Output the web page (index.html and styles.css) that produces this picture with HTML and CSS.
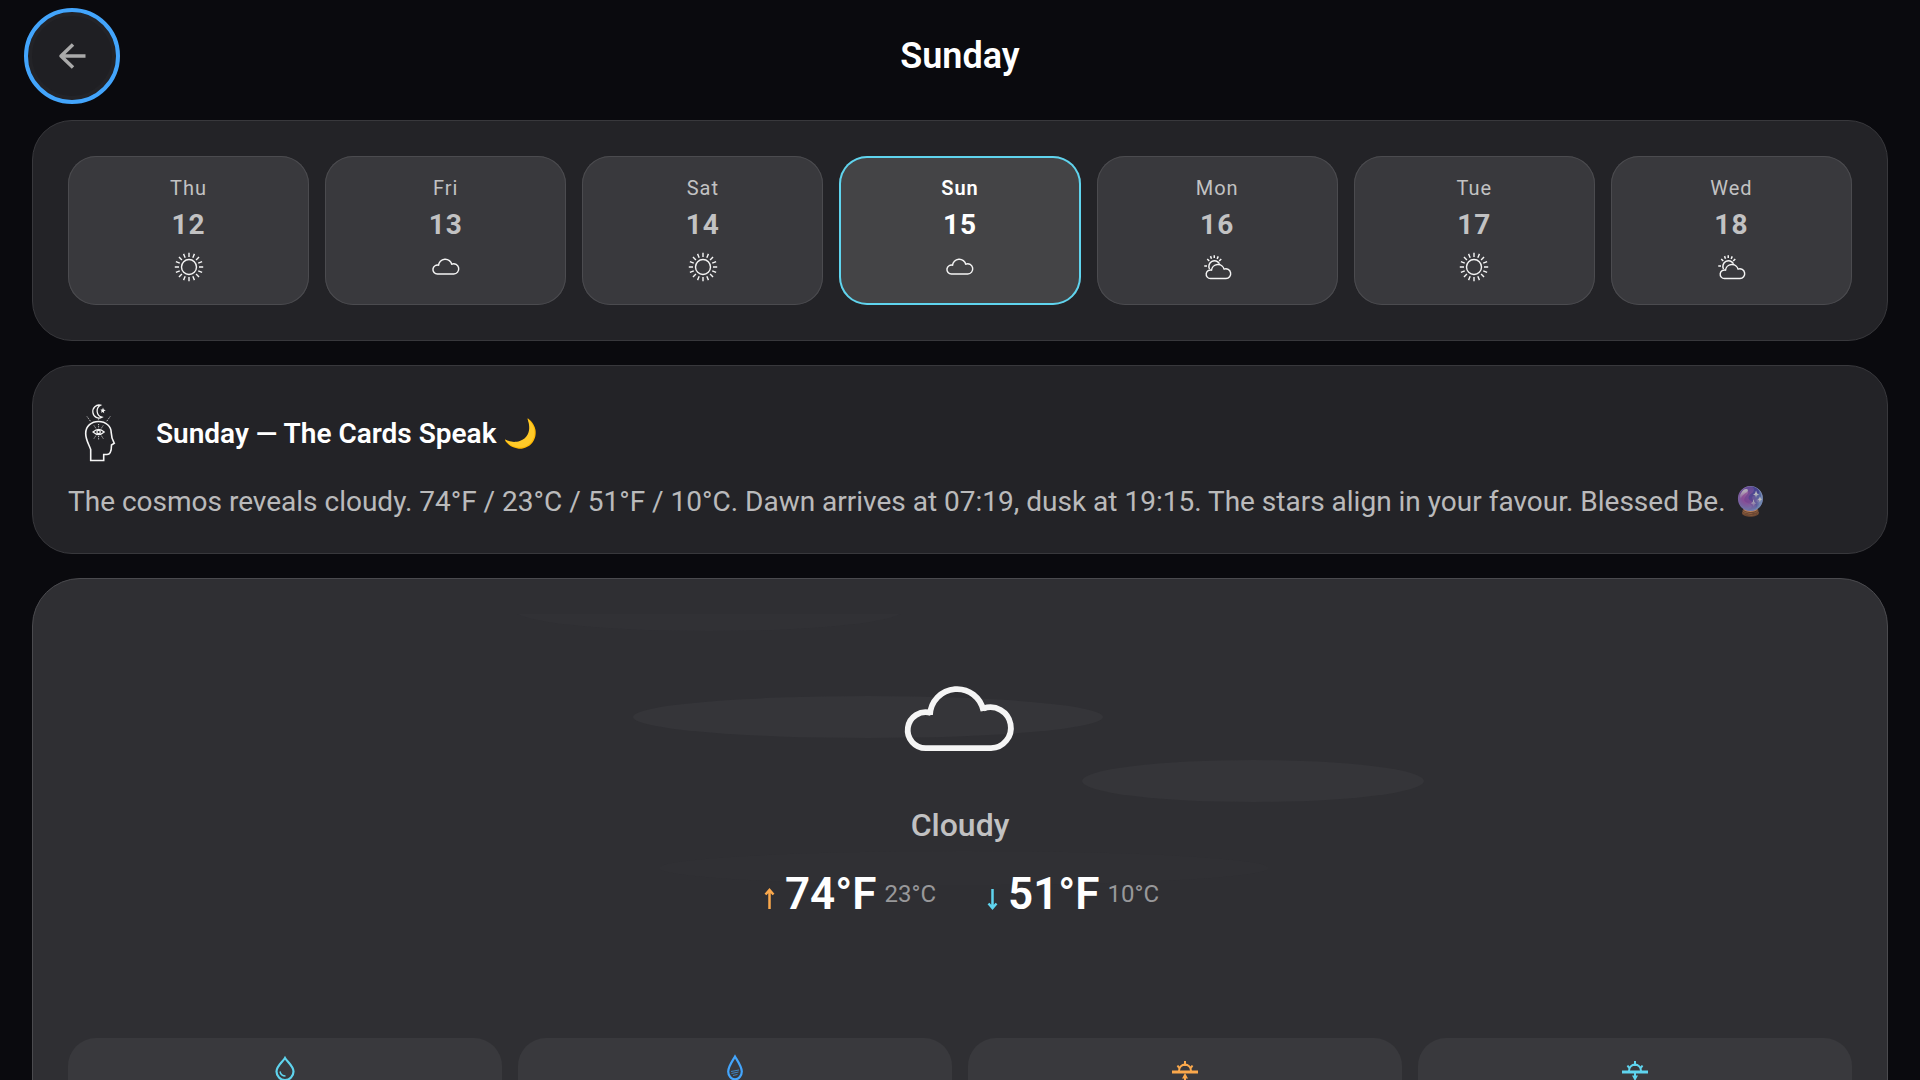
FILE: index.html
```html
<!DOCTYPE html>
<html lang="en">
<head>
<meta charset="utf-8">
<meta name="viewport" content="width=device-width, initial-scale=1">
<title>Sunday</title>
<link rel="stylesheet" href="styles.css">
</head>
<body>
<svg class="sprite" aria-hidden="true">
  <symbol id="cloud" viewBox="0 0 144 144">
    <path d="M43 65A18 18 0 1 0 38 100.200H103A20.5 20.5 0 1 0 95.500 60.400" stroke-width="5.800"/>
    <path d="M42 67A27 27 0 0 1 95.500 63" stroke-width="5.800"/>
  </symbol>
  <symbol id="sun" viewBox="0 0 36 36">
    <circle cx="18" cy="18" r="7.500" stroke-width="1.400"/>
    <g id="rays" stroke-width="1.400">
      <path id="ray" d="M18 3.800V8M18 28V32.200M3.800 18H8M28 18H32.200"/>
      <use href="#ray" transform="rotate(22.500 18 18)"/>
      <use href="#ray" transform="rotate(45 18 18)"/>
      <use href="#ray" transform="rotate(67.500 18 18)"/>
    </g>
  </symbol>
  <symbol id="partly" viewBox="0 0 144 144">
    <g stroke-width="6">
      <path d="M42 80A22 22 0 0 1 82 59"/>
      <path d="M21 68H32M33 40L41 48M46 28.500L50 39M61 25V36M77 29.500L72.500 39.500M89 40L81 48"/>
      <g transform="translate(10 23) scale(.95)">
        <path d="M43 65A18 18 0 1 0 38 100.200H103A20.5 20.5 0 1 0 95.500 60.400"/>
        <path d="M42 67A27 27 0 0 1 95.500 63"/>
      </g>
    </g>
  </symbol>
  <symbol id="horizon" viewBox="0 0 32 32">
    <path d="M3 18H29" stroke-width="3"/>
    <path d="M10 17A6 6.500 0 0 1 22 17M16 7V12M8.500 11.500L10.500 14.500M23.500 11.500L21.500 14.500" stroke-width="2"/>
  </symbol>
</svg>

<div class="app">
  <header class="topbar">
    <button class="back" type="button" aria-label="Back">
      <svg viewBox="0 0 32 32"><path d="M29.500 16H5M17 4.500L5 16L17 27.500"/></svg>
    </button>
    <h1 class="title">Sunday</h1>
  </header>

  <main class="content">
    <nav class="panel days" aria-label="Days">
      <button class="day" type="button"><span class="name">Thu</span><span class="date">12</span><svg class="icon"><use href="#sun"/></svg></button>
      <button class="day" type="button"><span class="name">Fri</span><span class="date">13</span><svg class="icon"><use href="#cloud"/></svg></button>
      <button class="day" type="button"><span class="name">Sat</span><span class="date">14</span><svg class="icon"><use href="#sun"/></svg></button>
      <button class="day selected" type="button" aria-current="date"><span class="name">Sun</span><span class="date">15</span><svg class="icon"><use href="#cloud"/></svg></button>
      <button class="day" type="button"><span class="name">Mon</span><span class="date">16</span><svg class="icon"><use href="#partly"/></svg></button>
      <button class="day" type="button"><span class="name">Tue</span><span class="date">17</span><svg class="icon"><use href="#sun"/></svg></button>
      <button class="day" type="button"><span class="name">Wed</span><span class="date">18</span><svg class="icon"><use href="#partly"/></svg></button>
    </nav>

    <section class="panel reading">
      <div class="reading-head">
        <svg class="oracle" viewBox="0 0 64 64">
          <path d="M22.700 59.500V48.500C21 43.500 17.700 39 17.700 32.500C17.700 25 23.500 20.500 30.500 20.500C38 20.500 43.200 25.500 43.200 31.500C43.200 36 44 38 46.300 42.300L43.500 44C43.500 49 42 53.500 39 53.500H35.700V59.500Z" stroke-width="1.600"/>
          <path d="M32.500 4.200A6.200 6.500 0 1 0 34 16.200A6.500 6.500 0 0 1 32.500 4.200Z" stroke-width="1.300"/>
          <path class="solid" d="M35 6.500L35.700 8.500L37.700 9.200L35.900 10.300L36.200 12.200L34.700 11L33 11.800L33.600 10L32.500 8.500L34.300 8.500Z"/>
          <path d="M25 31Q30.600 26 36.200 31Q30.600 36 25 31Z" stroke-width="1.200"/>
          <circle cx="30.600" cy="31" r="1.700" stroke-width="1.200"/>
          <path d="M30.600 23V27M30.600 35V39M26 24.500L28 27.500M35.200 24.500L33.200 27.500M26 37.500L28 34.500M35.200 37.500L33.200 34.500M19 15.500L23 21M42.200 15.500L38.200 21M30.600 17.500V19" stroke-width=".8" stroke-dasharray="1.200 1"/>
        </svg>
        <h2 class="heading">Sunday — The Cards Speak 🌙</h2>
      </div>
      <p class="forecast">The cosmos reveals cloudy. 74°F / 23°C / 51°F / 10°C. Dawn arrives at 07:19, dusk at 19:15. The stars align in your favour. Blessed Be. 🔮</p>
    </section>

    <section class="panel hero">
      <div class="scene">
        <svg class="sky" viewBox="0 0 1784 388" preserveAspectRatio="xMidYMin slice" aria-hidden="true">
          <ellipse cx="641" cy="-4" rx="195" ry="21" opacity=".4"/>
          <ellipse cx="800" cy="103" rx="235" ry="21"/>
          <ellipse cx="1185" cy="167" rx="171" ry="21"/>
          <ellipse cx="896" cy="254" rx="305" ry="17" fill="#303034"/>
        </svg>
        <svg class="hero-icon"><use href="#cloud"/></svg>
        <p class="condition">Cloudy</p>
        <div class="temps">
          <div class="temp high">
            <svg class="arrow" viewBox="0 0 16 44"><path d="M8.500 37V18.500M4.500 22.500L8.500 18L12.500 22.500"/></svg>
            <strong>74°F</strong><span>23°C</span>
          </div>
          <div class="temp low">
            <svg class="arrow" viewBox="0 0 16 44"><path d="M8.500 17V35.500M4.500 31.500L8.500 36L12.500 31.500"/></svg>
            <strong>51°F</strong><span>10°C</span>
          </div>
        </div>
      </div>
      <div class="stats">
        <div class="stat cyan">
          <svg class="stat-icon" viewBox="0 0 32 32"><path d="M16 4C14 7.500 7.500 12 7.500 17.500A8.500 8.500 0 0 0 24.500 17.500C24.500 12 18 7.500 16 4Z" stroke-width="2.200"/><path d="M11 17.500C11.500 20 13.500 22 16.500 22" stroke-width="1.500"/></svg>
        </div>
        <div class="stat blue">
          <svg class="stat-icon" viewBox="0 0 32 32"><path d="M16 2.500C14 6 9.200 12.500 9.200 17.500A6.800 7.800 0 0 0 22.800 17.500C22.800 12.500 18 6 16 2.500Z" stroke-width="2.200"/><path d="M12 17.500L20 16M12.500 19.500L19.500 18M14 21.500L18.500 20.500" stroke-width="1" opacity=".7"/></svg>
        </div>
        <div class="stat orange">
          <svg class="stat-icon" viewBox="0 0 32 32"><use href="#horizon"/><path class="solid" d="M16 19L19 24.500H17V30H15V24.500H13Z"/></svg>
        </div>
        <div class="stat cyan">
          <svg class="stat-icon" viewBox="0 0 32 32"><use href="#horizon"/><path class="solid" d="M15 19H17V21.500H19L16 27L13 21.500H15Z"/></svg>
        </div>
      </div>
    </section>
  </main>
</div>
</body>
</html>
```
FILE: styles.css
```css
* {
  box-sizing: border-box;
}

body {
  margin: 0;
  background: #0a0a0e;
  color: #fff;
  font-family: Roboto, "Liberation Sans", sans-serif;
}

h1, h2, p {
  margin: 0;
}

button {
  font: inherit;
  color: inherit;
}

svg {
  fill: none;
  stroke: currentColor;
  flex: none;
}

.sprite {
  display: none;
}

.app {
  height: 100vh;
  display: flex;
  flex-direction: column;
  overflow: hidden;
}

.topbar {
  flex: none;
  display: grid;
  grid-template-columns: 88px 1fr 88px;
  align-items: center;
  padding: 12px 28px;
}

.back {
  width: 88px;
  height: 88px;
  display: grid;
  place-items: center;
  border: 4px solid #232327;
  border-radius: 50%;
  outline: 4px solid #43a5fc;
  background: #1f1f23;
  color: #aaa;
}

.back svg {
  width: 32px;
  height: 32px;
  stroke-width: 3.5;
  stroke-linejoin: round;
}

.title {
  text-align: center;
  font-size: 36px;
  line-height: 44px;
  font-weight: 600;
}

.content {
  flex: 1;
  min-height: 0;
  overflow-y: auto;
  scrollbar-width: none;
  display: flex;
  flex-direction: column;
  gap: 24px;
  padding: 8px 32px 32px;
}

.panel {
  flex: none;
  padding: 35px;
  border: 1px solid #38383c;
  border-radius: 40px;
  background: #232327;
}

.days {
  display: grid;
  grid-template-columns: repeat(7, 1fr);
  gap: 16px;
}

.day {
  display: flex;
  flex-direction: column;
  align-items: center;
  gap: 8px;
  padding: 20px 0;
  border: 0;
  border-radius: 28px;
  background: #39393d;
  box-shadow: inset 0 0 0 1px #4b4b4f;
  color: #c2c2c3;
  letter-spacing: 1px;
}

.day.selected {
  background: #444446;
  box-shadow: inset 0 0 0 2px #5fd4ee;
  color: #fff;
}

.name {
  font-size: 20px;
  line-height: 24px;
}

.selected .name {
  font-weight: 600;
}

.date {
  font-size: 28px;
  line-height: 33px;
  font-weight: 700;
}

.icon {
  width: 36px;
  height: 36px;
  color: #f5f5f5;
}

.reading {
  display: flex;
  flex-direction: column;
  gap: 20px;
}

.reading-head {
  display: flex;
  align-items: center;
  gap: 24px;
}

.oracle {
  width: 64px;
  height: 64px;
  color: #f5f5f5;
}

.solid {
  fill: currentColor;
  stroke: none;
}

.heading {
  font-size: 28px;
  line-height: 33px;
  font-weight: 600;
}

.forecast {
  font-size: 28px;
  line-height: 33px;
  color: rgba(255, 255, 255, 0.7);
}

.hero {
  display: flex;
  flex-direction: column;
  gap: 36px;
  border-color: #4a4a4e;
  border-radius: 48px;
  background: #2f2f33;
}

.scene {
  position: relative;
  display: flex;
  flex-direction: column;
  align-items: center;
  padding: 34px 0 82px;
}

.sky {
  position: absolute;
  inset: 0;
  width: 100%;
  height: 100%;
  fill: #353539;
  stroke: none;
}

.hero-icon {
  position: relative;
  width: 144px;
  height: 144px;
  color: #f5f5f5;
}

.condition {
  position: relative;
  margin: 14px 0 24px;
  font-size: 32px;
  line-height: 38px;
  font-weight: 500;
  color: #c1c1c2;
}

.temps {
  position: relative;
  display: flex;
  gap: 48px;
}

.temp {
  display: flex;
  align-items: center;
  gap: 8px;
}

.temp strong {
  font-size: 44px;
  line-height: 52px;
  font-weight: 600;
}

.temp span {
  font-size: 24px;
  line-height: 28px;
  color: #98989a;
}

.arrow {
  width: 16px;
  height: 44px;
  stroke-width: 2.5;
}

.high .arrow,
.orange {
  color: #faa84c;
}

.low .arrow,
.cyan {
  color: #5fd4ee;
}

.blue {
  color: #43a5fc;
}

.stats {
  display: grid;
  grid-template-columns: repeat(4, 1fr);
  gap: 16px;
}

.stat {
  display: flex;
  justify-content: center;
  min-height: 140px;
  padding: 16px;
  border-radius: 28px;
  background: #39393d;
}

.stat-icon {
  width: 32px;
  height: 32px;
}
```
